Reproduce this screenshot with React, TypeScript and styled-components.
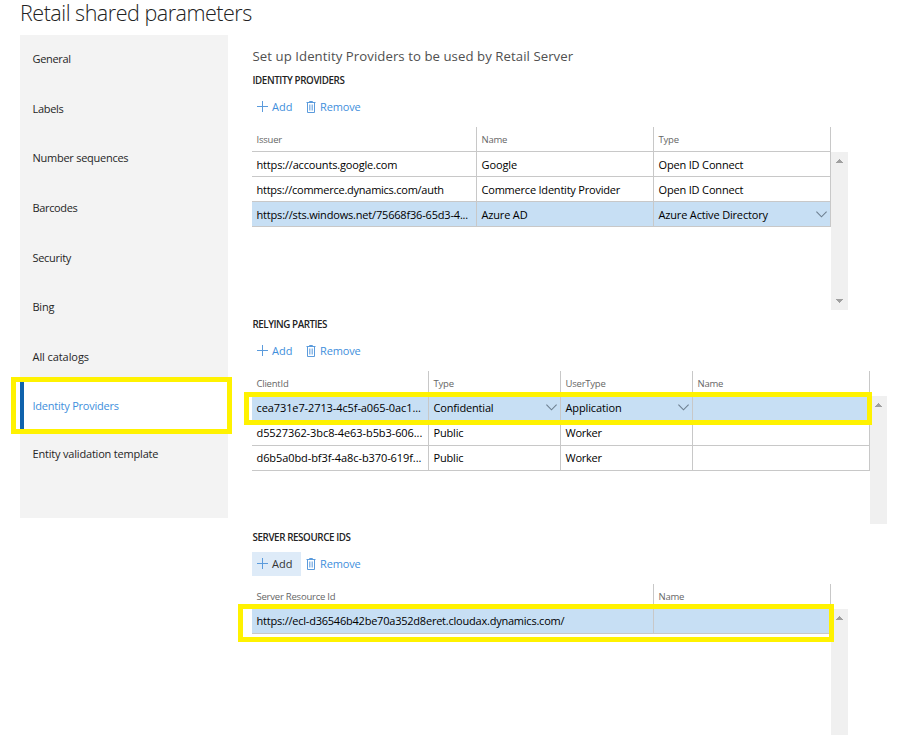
import React from "react";
import styled, { createGlobalStyle, css } from "styled-components";

const GlobalStyle = createGlobalStyle`
  * { box-sizing: border-box; }
  body {
    margin: 0;
    background: #fff;
    color: #000;
    font-family: "Open Sans", "Noto Sans", sans-serif;
    font-size: 11px;
    overflow: hidden;
  }
`;

const Page = styled.div`
  width: 912px;
  height: 745px;
  padding-left: 20px;
`;

const Title = styled.h1`
  margin: 0;
  height: 35px;
  font-size: 21.5px;
  font-weight: 300;
  line-height: 25px;
  letter-spacing: -0.48px;
  color: #222;
  white-space: nowrap;
`;

const Columns = styled.div`
  display: flex;
  gap: 24px;
`;

const Sidebar = styled.nav`
  width: 208px;
  height: 483px;
  background: #f3f3f3;
`;

const NavItem = styled.a<{ $height: number; $selected?: boolean }>`
  position: relative;
  display: flex;
  align-items: center;
  height: ${(p) => p.$height}px;
  padding: 0 0 2px 12.5px;
  color: #262626;
  ${(p) =>
    p.$selected &&
    css`
      padding-left: 8.5px;
      border-left: 4px solid #0f62ac;
      background: #fff;
      color: #3f8fdc;
    `}
`;

const Highlight = styled.span<{ $top: number; $right: number; $bottom: number; $left: number }>`
  position: absolute;
  z-index: 2;
  top: ${(p) => -p.$top}px;
  right: ${(p) => -p.$right}px;
  bottom: ${(p) => -p.$bottom}px;
  left: ${(p) => -p.$left}px;
  border: 5px solid #fff200;
  pointer-events: none;
`;

const HighlightGap = styled.span`
  position: absolute;
  z-index: 1;
  top: 0;
  bottom: 0;
  left: -8px;
  width: 4px;
  background: #fff;
`;

const Label = styled.span<{ $track?: number }>`
  letter-spacing: ${(p) => p.$track ?? 0}px;
  white-space: nowrap;
`;

const Main = styled.main`
  padding-top: 12px;
`;

const Intro = styled.h2`
  margin: 0;
  height: 24px;
  padding-left: 0.5px;
  font-size: 13.2px;
  font-weight: 400;
  line-height: 19px;
  letter-spacing: 0.06px;
  color: #505050;
  white-space: nowrap;
`;

const Section = styled.section<{ $height: number }>`
  height: ${(p) => p.$height}px;
`;

const SectionTitle = styled.h3<{ $track: number }>`
  margin: 0;
  height: 24px;
  padding-left: 0.5px;
  font-size: 9.8px;
  font-weight: 600;
  line-height: 19px;
  letter-spacing: ${(p) => p.$track}px;
  color: #222;
`;

const Toolbar = styled.div`
  display: flex;
  height: 32px;
`;

const ToolButton = styled.button<{ $active?: boolean }>`
  display: flex;
  align-items: center;
  gap: 4px;
  height: 24px;
  padding: 0 8.5px 0 5px;
  border: 0;
  background: ${(p) => (p.$active ? "#deebf8" : "transparent")};
  color: ${(p) => (p.$active ? "#333" : "#3f8fdc")};
  font: inherit;
  svg { display: block; flex: none; margin-bottom: 1px; }
  span { padding-bottom: 2px; }
`;

const AddButton = styled(ToolButton)`
  gap: 3px;
  width: 49px;
  padding-left: 4px;
`;

const GridHeader = styled.div<{ $cols: string }>`
  display: grid;
  grid-template-columns: ${(p) => p.$cols};
  width: max-content;
  height: 25px;
  border-bottom: 1px solid #c8c8c8;
  color: #666;
  font-size: 9.5px;
`;

const Row = styled.div<{ $cols: string; $selected?: boolean }>`
  position: relative;
  display: grid;
  grid-template-columns: ${(p) => p.$cols};
  height: 25px;
  border-bottom: 1px solid #c8c8c8;
  background: ${(p) => (p.$selected ? "#c7dff4" : "#fff")};
`;

const Cell = styled.div<{ $raised?: boolean }>`
  display: flex;
  align-items: center;
  justify-content: space-between;
  min-width: 0;
  padding: ${(p) => (p.$raised ? "0 3.5px 1px 4.5px" : "1px 3.5px 0 4.5px")};
  border-right: 1px solid #c8c8c8;
  svg { flex: none; margin-bottom: 1px; }
`;

const GridBody = styled.div`
  display: flex;
  align-items: flex-start;
`;

const ScrollBar = styled.div<{ $height: number }>`
  display: flex;
  flex-direction: column;
  align-items: center;
  justify-content: space-between;
  width: 17px;
  height: ${(p) => p.$height}px;
  padding: 7px 0;
  background: #f0f0f0;
`;

const PlusIcon = () => (
  <svg width="13" height="13" viewBox="0 0 13 13" fill="none" stroke="#5b9bdc">
    <path d="M6.5 1v11M1 6.5h11" />
  </svg>
);

const TrashIcon = () => (
  <svg width="10" height="12" viewBox="0 0 10 12" fill="none" stroke="#5b9bdc">
    <path d="M.5 1.5h9M3.5 1.5v-1h3v1M1.5 1.5v10h7v-10" />
    <path d="M3.5 3.5v6M5 3.5v6M6.5 3.5v6" strokeWidth=".7" />
  </svg>
);

const ChevronIcon = () => (
  <svg width="11" height="7" viewBox="0 0 11 7" fill="none" stroke="#6d7f90" strokeWidth="1.1">
    <path d="M.4.6l5.1 5.2L10.6.6" />
  </svg>
);

const ScrollArrow = ({ down }: { down?: boolean }) => (
  <svg width="7" height="4" viewBox="0 0 7 4" fill="#a0a0a0" shapeRendering="crispEdges">
    <path d={down ? "M0 0h7v1H6v1H5v1H4v1H3V3H2V2H1V1H0z" : "M0 4h7V3H6V2H5V1H4V0H3v1H2v1H1v1H0z"} />
  </svg>
);

type CellData = { text: string; track?: number; menu?: boolean };

const Actions = ({ active }: { active?: boolean }) => (
  <Toolbar>
    <AddButton $active={active}>
      <PlusIcon />
      <Label>Add</Label>
    </AddButton>
    <ToolButton>
      <TrashIcon />
      <Label $track={-0.15}>Remove</Label>
    </ToolButton>
  </Toolbar>
);

type GridProps = {
  cols: string;
  headers: CellData[];
  rows: CellData[][];
  selected: number;
  scrollHeight: number;
  arrowDown?: boolean;
  raised?: boolean;
  highlight?: [number, number, number, number];
};

const Grid = ({ cols, headers, rows, selected, scrollHeight, arrowDown, raised, highlight }: GridProps) => (
  <>
    <GridHeader $cols={cols}>
      {headers.map((h) => (
        <Cell key={h.text}>
          <Label $track={h.track ?? -0.22}>{h.text}</Label>
        </Cell>
      ))}
    </GridHeader>
    <GridBody>
      <div>
        {rows.map((cells, r) => (
          <Row key={r} $cols={cols} $selected={r === selected}>
            {cells.map((c, i) => (
              <Cell key={i} $raised={raised}>
                <Label $track={c.track ?? -0.17}>{c.text}</Label>
                {c.menu && <ChevronIcon />}
              </Cell>
            ))}
            {highlight && r === selected && (
              <Highlight
                $top={highlight[0]}
                $right={highlight[1]}
                $bottom={highlight[2]}
                $left={highlight[3]}
              />
            )}
          </Row>
        ))}
      </div>
      <ScrollBar $height={scrollHeight}>
        <ScrollArrow />
        {arrowDown && <ScrollArrow down />}
      </ScrollBar>
    </GridBody>
  </>
);

const navItems: { text: string; height: number; track?: number; selected?: boolean }[] = [
  { text: "General", height: 49, track: -0.32 },
  { text: "Labels", height: 50, track: -0.3 },
  { text: "Number sequences", height: 49, track: -0.26 },
  { text: "Barcodes", height: 50, track: -0.35 },
  { text: "Security", height: 50, track: -0.3 },
  { text: "Bing", height: 49, track: -0.25 },
  { text: "All catalogs", height: 50, track: -0.08 },
  { text: "Identity Providers", height: 48, track: -0.23, selected: true },
  { text: "Entity validation template", height: 49, track: -0.19 },
];

export default function App() {
  return (
    <>
      <GlobalStyle />
      <Page>
        <Title>Retail shared parameters</Title>
        <Columns>
          <Sidebar>
            {navItems.map((n) => (
              <NavItem key={n.text} $height={n.height} $selected={n.selected}>
                <Label $track={n.track}>{n.text}</Label>
                {n.selected && (
                  <>
                    <HighlightGap />
                    <Highlight $top={5} $right={4} $bottom={4} $left={13} />
                  </>
                )}
              </NavItem>
            ))}
          </Sidebar>
          <Main>
            <Intro>Set up Identity Providers to be used by Retail Server</Intro>
            <Section $height={244}>
              <SectionTitle $track={-0.4}>IDENTITY PROVIDERS</SectionTitle>
              <Actions />
              <Grid
                cols="225px 177px 177px"
                headers={[{ text: "Issuer" }, { text: "Name" }, { text: "Type" }]}
                rows={[
                  [{ text: "https://accounts.google.com" }, { text: "Google", track: -0.1 }, { text: "Open ID Connect" }],
                  [
                    { text: "https://commerce.dynamics.com/auth", track: -0.25 },
                    { text: "Commerce Identity Provider", track: -0.21 },
                    { text: "Open ID Connect" },
                  ],
                  [
                    { text: "https://sts.windows.net/75668f36-65d3-4...", track: -0.18 },
                    { text: "Azure AD" },
                    { text: "Azure Active Directory", menu: true },
                  ],
                ]}
                selected={2}
                scrollHeight={158}
                arrowDown
              />
            </Section>
            <Section $height={213}>
              <SectionTitle $track={-0.45}>RELYING PARTIES</SectionTitle>
              <Actions />
              <Grid
                cols="177px 132px 132px 177px"
                headers={[{ text: "ClientId" }, { text: "Type" }, { text: "UserType" }, { text: "Name" }]}
                rows={[
                  [
                    { text: "cea731e7-2713-4c5f-a065-0ac1...", track: -0.1 },
                    { text: "Confidential", menu: true },
                    { text: "Application", track: -0.12, menu: true },
                    { text: "" },
                  ],
                  [
                    { text: "d5527362-3bc8-4e63-b5b3-606...", track: -0.08 },
                    { text: "Public" },
                    { text: "Worker", track: -0.25 },
                    { text: "" },
                  ],
                  [
                    { text: "d6b5a0bd-bf3f-4a8c-b370-619f...", track: -0.08 },
                    { text: "Public" },
                    { text: "Worker", track: -0.25 },
                    { text: "" },
                  ],
                ]}
                selected={0}
                scrollHeight={128}
                raised
                highlight={[4, 2, 5, 8]}
              />
            </Section>
            <Section $height={210}>
              <SectionTitle $track={-0.4}>SERVER RESOURCE IDS</SectionTitle>
              <Actions active />
              <Grid
                cols="402px 177px"
                headers={[{ text: "Server Resource Id" }, { text: "Name" }]}
                rows={[
                  [
                    { text: "https://ecl-d36546b42be70a352d8eret.cloudax.dynamics.com/", track: -0.22 },
                    { text: "" },
                  ],
                ]}
                selected={0}
                scrollHeight={126}
                raised
                highlight={[5, 3, 9, 14]}
              />
            </Section>
          </Main>
        </Columns>
      </Page>
    </>
  );
}
